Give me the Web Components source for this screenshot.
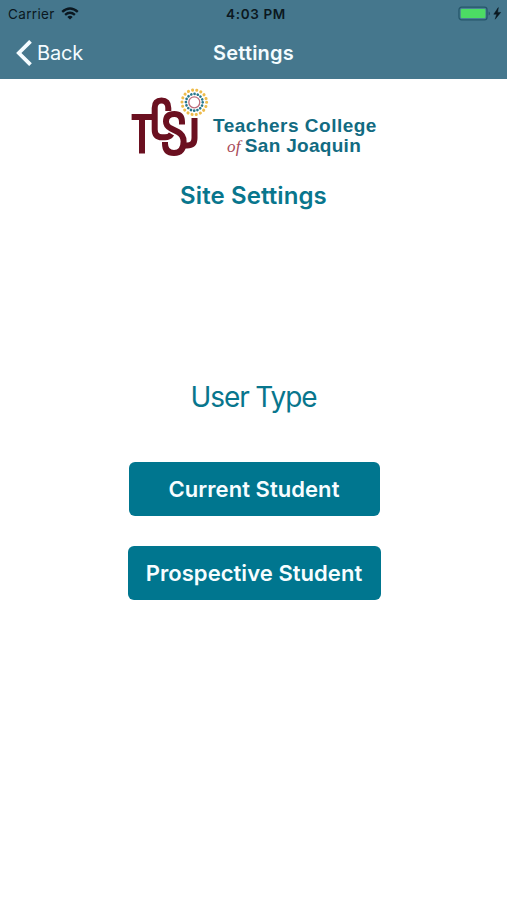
<!DOCTYPE html>
<html lang="en">
<head>
<meta charset="utf-8">
<title>Settings</title>
<style>
html,body{margin:0;height:100%;background:#fff}
body{font-family:Inter,"Liberation Sans",sans-serif}
</style>
</head>
<body>
<settings-screen></settings-screen>
<script>
const define = (name, html) => customElements.define(name, class extends HTMLElement {
  constructor() {
    super();
    this.attachShadow({ mode: 'open' }).innerHTML = html;
  }
});

define('status-bar', `
<style>
:host{display:grid;grid-template-columns:1fr auto 1fr;align-items:center;height:27px;padding:0 5px 0 8px;box-sizing:border-box;color:#0b1820;font-size:13.5px;line-height:27px}
.l{display:flex;align-items:center;gap:6px}
.l svg{margin-top:-1px}
.r{display:flex;align-items:center;justify-content:flex-end}
.t{font-weight:600;font-size:13.5px;letter-spacing:.65px;padding:1px 0 0 2px}
.c{letter-spacing:.35px;padding-top:1px}
svg{display:block}
</style>
<div class="l"><span class="c">Carrier</span>
<svg width="18" height="13" viewBox="0 0 18 13" fill="none" stroke="#0b1820" stroke-width="2.4"><path d="M1.2 4.9Q9 -1.9 16.8 4.9M4.1 7.8Q9 3.7 13.9 7.8"/><path d="M6.3 9.9Q9 7.8 11.7 9.9L9 12.6Z" fill="#0b1820" stroke="none"/></svg></div>
<div class="t">4:03 PM</div>
<div class="r"><svg width="44" height="16" viewBox="0 0 44 16"><rect x="1" y="1.2" width="28" height="12.6" rx="2.6" fill="#4a8395" stroke="#26566a" stroke-width="1.3"/><rect x="2.8" y="2.9" width="24.6" height="9.2" rx="1" fill="#4cdc64"/><path d="M30.6 5.4q1.4 .4 1.4 2t-1.4 2z" fill="#26566a"/><path d="M40.3 1.6L35.8 8.2H38.7L37.2 13.2L42.7 6.4H39.6Z" fill="#0b1820" stroke="#0b1820" stroke-width=".5"/></svg></div>`);

define('nav-bar', `
<style>
:host{display:grid;grid-template-columns:1fr auto 1fr;align-items:center;height:51px;padding:0 16px;box-sizing:border-box;color:#f4fcff}
.b{display:flex;align-items:center;gap:5px;font-size:20px;line-height:26px;letter-spacing:-.2px}
.t{font-size:20px;font-weight:600;line-height:26px;letter-spacing:.2px}
svg{display:block}
</style>
<div class="b"><svg width="16" height="26" viewBox="0 0 16 26" fill="none" stroke="#f4fcff" stroke-width="3.8"><path d="M14.5 1.3L2.8 13L14.5 24.7"/></svg><span><slot name="back"></slot></span></div>
<div class="t"><slot></slot></div>`);

define('college-logo', `
<style>
:host{display:flex;width:248px;height:72px;align-items:flex-start}
svg{display:block;flex:none}
.w{display:flex;flex-direction:column;color:#126b82;font-family:"Liberation Sans",sans-serif;font-weight:700;font-size:19px;line-height:20px;padding-top:30px;margin-left:3px;white-space:nowrap;letter-spacing:.5px}
.s{padding-left:14px;letter-spacing:.3px}
i{font:italic 400 17px/20px "Liberation Serif",serif;color:#a84a58;margin-right:4px}
</style>
<svg width="80" height="72" viewBox="0 0 80 72" role="img" aria-label="College emblem">
<g fill="none" stroke="#6b1020" stroke-width="6">
<path d="M1.6 31H25"/>
<path d="M12 30V67.5"/>
<path d="M38.3 25V22Q38.3 14.4 31.5 14.4Q24.7 14.4 24.7 22V43.5Q24.7 51.3 32 51.3H35Q39.5 51.3 41.5 48"/>
<path d="M52 38.5V36Q52 28 44.3 28Q36 28 36 35.5Q36 40 41 42.5L48 46Q53.6 49 53.6 55.5Q53.6 67 44 67Q35 67 35 57.5V56"/>
<path d="M53 59.5H57Q64.5 59.5 64.5 52V32"/>
</g>
<g fill="none">
<circle cx="64.3" cy="16.3" r="5.5" stroke="#bd6c7a" stroke-width="1.3"/>
<circle cx="64.3" cy="16.3" r="8.4" stroke="#27788d" stroke-width="2.7" stroke-linecap="round" stroke-dasharray="0.01 3.289"/>
<circle cx="64.3" cy="16.3" r="12.3" stroke="#edbb4b" stroke-width="3.1" stroke-linecap="round" stroke-dasharray="0.01 4.284"/>
</g>
</svg>
<div class="w"><span>Teachers College</span><span class="s"><i>of</i>San Joaquin</span></div>`);

define('action-button', `
<style>
:host{display:block}
button{display:block;width:100%;height:54px;border:0;border-radius:6px;background:#00768f;color:#f7fdff;font:600 22px/54px Inter,"Liberation Sans",sans-serif;letter-spacing:.05px;padding:0;text-align:center;white-space:nowrap}
</style>
<button><slot></slot></button>`);

define('settings-screen', `
<style>
:host{display:flex;flex-direction:column;height:900px}
header{background:#45778d;height:79px;flex:none}
main{display:flex;flex-direction:column;align-items:center;padding-top:7px;color:#08768d}
college-logo{margin-left:1px}
h1{margin:21px 0 0;font-size:24px;line-height:34px;font-weight:600;letter-spacing:.1px}
h2{margin:166px 0 0;font-size:28px;line-height:36px;font-weight:400;letter-spacing:-1.1px}
.a{width:251px;margin-top:47px;margin-left:1px}
.b{width:253px;margin-top:30.4px;margin-left:1px}
</style>
<header><status-bar></status-bar><nav-bar><span slot="back">Back</span>Settings</nav-bar></header>
<main>
<college-logo></college-logo>
<h1>Site Settings</h1>
<h2>User Type</h2>
<action-button class="a">Current Student</action-button>
<action-button class="b">Prospective Student</action-button>
</main>`);
</script>
</body>
</html>
